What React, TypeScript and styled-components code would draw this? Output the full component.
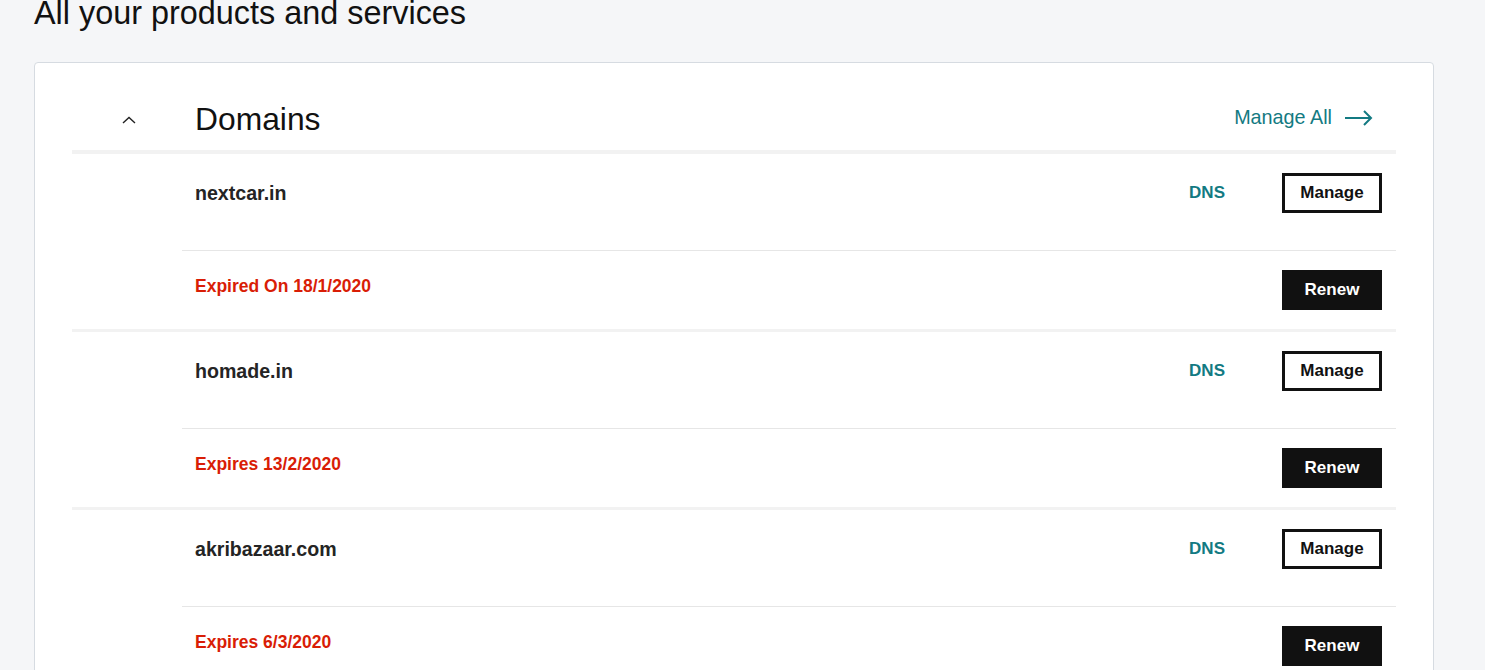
import styled, { createGlobalStyle } from "styled-components";

const GlobalStyle = createGlobalStyle`
  html, body {
    margin: 0;
    padding: 0;
    background: #f5f6f8;
    font-family: "Liberation Sans", Arial, sans-serif;
  }
`;

const Page = styled.main`
  padding: 0 34px 40px;
`;

const Title = styled.h1`
  margin: -3px 0 33px;
  font-size: 32.4px;
  line-height: 32px;
  font-weight: 400;
  color: #111;
`;

const Card = styled.section`
  width: 1400px;
  box-sizing: border-box;
  background: #fff;
  border: 1px solid #d6dbe1;
  border-radius: 4px;
  padding: 0 37px;
`;

const Header = styled.div`
  display: grid;
  grid-template-columns: 114px 1fr auto;
  align-items: center;
  padding: 37px 23px 11px 0;
  border-bottom: 4px solid #f2f2f2;
`;

const Toggle = styled.button`
  display: flex;
  justify-content: center;
  background: none;
  border: 0;
  padding: 0;
  cursor: pointer;
`;

const SectionName = styled.h2`
  margin: 0 0 0 9px;
  font-size: 31.8px;
  line-height: 39px;
  font-weight: 400;
  color: #111;
`;

const ManageAll = styled.a`
  display: flex;
  align-items: center;
  gap: 13px;
  font-size: 19.8px;
  color: #137a82;
  text-decoration: none;
  margin-top: -4px;
`;

const Group = styled.div`
  border-bottom: 3px solid #f2f2f2;
`;

const Inner = styled.div`
  margin-left: 110px;
`;

const Row = styled.div<{ $top?: boolean }>`
  display: flex;
  align-items: center;
  padding: ${(p) => (p.$top ? "19px 14px 37px 13px" : "19px 14px 19px 13px")};
  border-top: ${(p) => (p.$top ? "none" : "1px solid #e6e6e6")};
`;

const DomainName = styled.span`
  flex: 1;
  font-size: 19.6px;
  font-weight: 700;
  color: #242424;
`;

const Expiry = styled.span`
  flex: 1;
  font-size: 17.5px;
  font-weight: 700;
  color: #d91d06;
  margin-bottom: 7px;
`;

const Dns = styled.a`
  font-size: 17px;
  font-weight: 700;
  color: #137a82;
  text-decoration: none;
  margin-right: 57px;
`;

const Button = styled.button<{ $solid?: boolean }>`
  width: 100px;
  height: 40px;
  box-sizing: border-box;
  font-family: inherit;
  font-size: 17px;
  font-weight: 700;
  cursor: pointer;
  border: 3px solid #111;
  background: ${(p) => (p.$solid ? "#111" : "#fff")};
  color: ${(p) => (p.$solid ? "#fff" : "#111")};
`;

const domains = [
  { name: "nextcar.in", expiry: "Expired On 18/1/2020" },
  { name: "homade.in", expiry: "Expires 13/2/2020" },
  { name: "akribazaar.com", expiry: "Expires 6/3/2020" },
];

function Caret() {
  return (
    <svg width="14" height="8" viewBox="0 0 14 8">
      <polyline points="1,7 7,1.5 13,7" fill="none" stroke="#222" strokeWidth="1.4" />
    </svg>
  );
}

function Arrow() {
  return (
    <svg width="28" height="16" viewBox="0 0 28 16">
      <line x1="0" y1="8" x2="26" y2="8" stroke="#137a82" strokeWidth="2" />
      <polyline points="19,1 26,8 19,15" fill="none" stroke="#137a82" strokeWidth="2" />
    </svg>
  );
}

export default function App() {
  return (
    <>
      <GlobalStyle />
      <Page>
        <Title>All your products and services</Title>
        <Card>
          <Header>
            <Toggle aria-label="Collapse">
              <Caret />
            </Toggle>
            <SectionName>Domains</SectionName>
            <ManageAll href="#">
              Manage All <Arrow />
            </ManageAll>
          </Header>
          {domains.map((d) => (
            <Group key={d.name}>
              <Inner>
                <Row $top>
                  <DomainName>{d.name}</DomainName>
                  <Dns href="#">DNS</Dns>
                  <Button>Manage</Button>
                </Row>
                <Row>
                  <Expiry>{d.expiry}</Expiry>
                  <Button $solid>Renew</Button>
                </Row>
              </Inner>
            </Group>
          ))}
        </Card>
      </Page>
    </>
  );
}
